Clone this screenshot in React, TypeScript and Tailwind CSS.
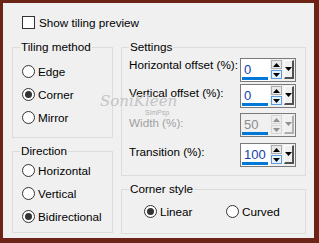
import React from "react";

const Radio = ({ checked, label }: { checked?: boolean; label: string }) => (
  <div className="flex items-center h-[13px] gap-[3px]">
    <span className="w-[13px] h-[13px] rounded-full border border-[#333333] bg-white flex items-center justify-center shrink-0">
      {checked && <span className="w-[7px] h-[7px] rounded-full bg-[#333333]" />}
    </span>
    <span className="leading-[14px] whitespace-nowrap">{label}</span>
  </div>
);

const Group = ({
  title,
  className,
  children,
}: {
  title: string;
  className: string;
  children?: React.ReactNode;
}) => (
  <div className={`relative border border-[#dcdcdc] ${className}`}>
    <span className="absolute left-[7px] top-[-8px] bg-[#f0f0f0] px-[1px] leading-[14px] whitespace-nowrap">
      {title}
    </span>
    {children}
  </div>
);

const Tri = ({ up }: { up?: boolean }) => (
  <svg width="7" height="4" viewBox="0 0 7 4">
    {up ? <polygon points="0,4 7,4 3.5,0" fill="#000" /> : <polygon points="0,0 7,0 3.5,4" fill="#000" />}
  </svg>
);

const Spin = ({ value, disabled }: { value: string; disabled?: boolean }) => (
  <div className="w-[56px] h-[24px] border border-[#7a7a7a] flex bg-[#f0f0f0]">
    <div
      className={`w-[29px] h-full flex flex-col justify-between pb-[1px] pl-[1px] ${
        disabled ? "bg-[#f0f0f0]" : "bg-white"
      }`}
    >
      <span
        className={`pl-[2px] pt-[3px] text-[13px] leading-[15px] ${
          disabled ? "text-[#8c8c8c]" : "text-[#1040a8]"
        }`}
      >
        {value}
      </span>
      <span className="w-[26px] h-[3px] bg-[#0078d7]" />
    </div>
    <div className={`flex flex-col gap-[1px] pt-[1px] pl-[1px] ${disabled ? "opacity-40" : ""}`}>
      <span className="w-[11px] h-[9px] border border-[#adadad] bg-[#e8e8e8] flex items-center justify-center">
        <Tri up />
      </span>
      <span
        className={`w-[11px] h-[9px] border flex items-center justify-center ${
          disabled ? "border-[#adadad] bg-[#e8e8e8]" : "border-[#5a9be0] bg-[#e5f1fb]"
        }`}
      >
        <Tri />
      </span>
    </div>
    <div className={`ml-[2px] mt-[1px] ${disabled ? "opacity-40" : ""}`}>
      <span className="w-[10px] h-[19px] border-t border-l border-t-[#ffffff] border-l-[#ffffff] border-r-2 border-b-2 border-r-[#505050] border-b-[#505050] bg-[#f0f0f0] flex items-center justify-center">
        <Tri />
      </span>
    </div>
  </div>
);

export default function App() {
  return (
    <div
      className="w-[319px] h-[243px] bg-[#6b2416] pl-[3px] pt-[3px] pr-[5px] pb-[5px]"
      style={{ fontFamily: '"Liberation Sans", Arial, sans-serif' }}
    >
      <div className="relative h-full bg-[#f0f0f0] text-[11.7px] text-black overflow-hidden">
        <div className="flex items-center gap-[4px] pl-[19px] pt-[13px] h-[26px]">
          <span className="w-[13px] h-[13px] border border-[#333333] bg-white shrink-0" />
          <span className="leading-[14px]">Show tiling preview</span>
        </div>

        <div className="flex gap-[8px] pl-[9px] mt-[18px]">
          <div className="flex flex-col gap-[13px] w-[101px]">
            <Group title="Tiling method" className="h-[91px]">
              <div className="flex flex-col gap-[10px] pt-[17px] pl-[9px]">
                <Radio label="Edge" />
                <Radio label="Corner" checked />
                <Radio label="Mirror" />
              </div>
            </Group>
            <Group title="Direction" className="h-[82px]">
              <div className="flex flex-col gap-[10px] pt-[12px] pl-[9px]">
                <Radio label="Horizontal" />
                <Radio label="Vertical" />
                <Radio label="Bidirectional" checked />
              </div>
            </Group>
          </div>

          <div className="flex flex-col gap-[13px] w-[185px]">
            <Group title="Settings" className="h-[129px]">
              <div className="flex flex-col pl-[7px] pt-[10px]">
                <div className="flex items-start h-[26px]">
                  <span className="w-[111px] leading-[14px] mt-[0px] whitespace-nowrap">Horizontal offset (%):</span>
                  <Spin value="0" />
                </div>
                <div className="flex items-start h-[29px]">
                  <span className="w-[111px] leading-[14px] mt-[2px] whitespace-nowrap">Vertical offset (%):</span>
                  <Spin value="0" />
                </div>
                <div className="flex items-start h-[30px]">
                  <span className="w-[111px] leading-[14px] mt-[3px] text-[#a0a0a0] whitespace-nowrap">Width (%):</span>
                  <Spin value="50" disabled />
                </div>
                <div className="flex items-start h-[24px]">
                  <span className="w-[111px] leading-[14px] mt-[2px] whitespace-nowrap">Transition (%):</span>
                  <Spin value="100" />
                </div>
              </div>
            </Group>
            <Group title="Corner style" className="h-[45px]">
              <div className="flex pt-[15px] pl-[22px]">
                <div className="w-[82px]">
                  <Radio label="Linear" checked />
                </div>
                <Radio label="Curved" />
              </div>
            </Group>
          </div>
        </div>

        <div className="absolute left-[97px] top-[90px] pointer-events-none">
          <span
            className="block text-[15px] leading-[16px] italic text-[#c4c4c4]"
            style={{ fontFamily: '"DejaVu Serif", serif' }}
          >
            SoniKleen
          </span>
          <span className="block ml-[45px] text-[7px] leading-[7px] text-[#b0b0b0]">SimPsp</span>
        </div>
      </div>
    </div>
  );
}
